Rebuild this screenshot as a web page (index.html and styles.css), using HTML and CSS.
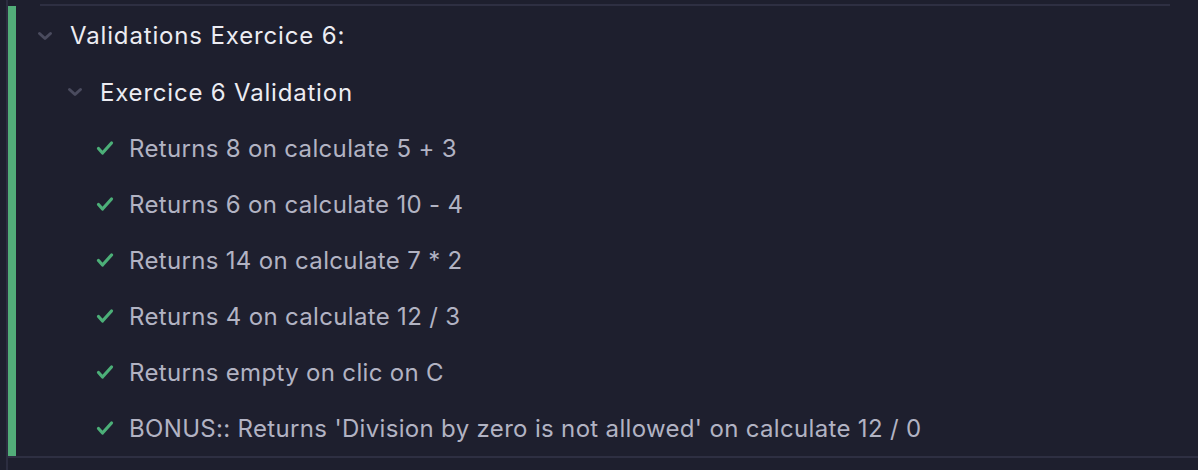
FILE: index.html
```html
<!DOCTYPE html>
<html>
<head>
<meta charset="utf-8">
<link rel="stylesheet" href="styles.css">
</head>
<body>
<div class="frame">
  <div class="topline"></div>
  <div class="panel">
    <div class="bar"></div>
    <div class="tree">
      <div class="row suite">
        <svg class="chev" width="16" height="10" viewBox="0 0 16 10"><path d="M2.5 2.5 L8 7.5 L13.5 2.5" fill="none" stroke="#4a4b5e" stroke-width="3" stroke-linecap="round" stroke-linejoin="round"/></svg>
        <span>Validations Exercice 6:</span>
      </div>
      <div class="row suite sub">
        <svg class="chev" width="16" height="10" viewBox="0 0 16 10"><path d="M2.5 2.5 L8 7.5 L13.5 2.5" fill="none" stroke="#4a4b5e" stroke-width="3" stroke-linecap="round" stroke-linejoin="round"/></svg>
        <span>Exercice 6 Validation</span>
      </div>
      <div class="row test"><svg class="check" width="18" height="16" viewBox="0 0 18 16"><path d="M2.5 8.5 L6.5 13 L15.5 3" fill="none" stroke="#4caf78" stroke-width="3.2" stroke-linecap="round" stroke-linejoin="round"/></svg><span>Returns 8 on calculate 5 + 3</span></div>
      <div class="row test"><svg class="check" width="18" height="16" viewBox="0 0 18 16"><path d="M2.5 8.5 L6.5 13 L15.5 3" fill="none" stroke="#4caf78" stroke-width="3.2" stroke-linecap="round" stroke-linejoin="round"/></svg><span>Returns 6 on calculate 10 - 4</span></div>
      <div class="row test"><svg class="check" width="18" height="16" viewBox="0 0 18 16"><path d="M2.5 8.5 L6.5 13 L15.5 3" fill="none" stroke="#4caf78" stroke-width="3.2" stroke-linecap="round" stroke-linejoin="round"/></svg><span>Returns 14 on calculate 7 * 2</span></div>
      <div class="row test"><svg class="check" width="18" height="16" viewBox="0 0 18 16"><path d="M2.5 8.5 L6.5 13 L15.5 3" fill="none" stroke="#4caf78" stroke-width="3.2" stroke-linecap="round" stroke-linejoin="round"/></svg><span>Returns 4 on calculate 12 / 3</span></div>
      <div class="row test"><svg class="check" width="18" height="16" viewBox="0 0 18 16"><path d="M2.5 8.5 L6.5 13 L15.5 3" fill="none" stroke="#4caf78" stroke-width="3.2" stroke-linecap="round" stroke-linejoin="round"/></svg><span>Returns empty on clic on C</span></div>
      <div class="row test"><svg class="check" width="18" height="16" viewBox="0 0 18 16"><path d="M2.5 8.5 L6.5 13 L15.5 3" fill="none" stroke="#4caf78" stroke-width="3.2" stroke-linecap="round" stroke-linejoin="round"/></svg><span>BONUS:: Returns 'Division by zero is not allowed' on calculate 12 / 0</span></div>
    </div>
  </div>
  <div class="bottomline"></div>
</div>
</body>
</html>
```
FILE: styles.css
```css
html, body {
  margin: 0;
  padding: 0;
  background: #1e1f2e;
  height: 100%;
}
body {
  font-family: Inter, "Noto Sans", "Liberation Sans", sans-serif;
  overflow: hidden;
}
.frame {
  margin-left: 6px;
  border-left: 2px solid #2c2d40;
  height: 470px;
  display: flex;
  flex-direction: column;
}
.topline {
  margin: 4px 28px 0 32px;
  height: 2px;
  background: #2e2f42;
}
.panel {
  display: flex;
  height: 450px;
}
.bar {
  width: 8px;
  background: #52ad79;
  flex: none;
}
.tree {
  display: flex;
  flex-direction: column;
  padding-top: 1px;
}
.row {
  height: 56px;
  display: flex;
  align-items: center;
  font-size: 24px;
  white-space: nowrap;
}
.row.suite {
  color: #ececf2;
  padding-left: 21px;
  gap: 17px;
  letter-spacing: 0.85px;
}
.row.suite:first-child { height: 57px; }
.row.sub { padding-left: 51px; letter-spacing: 0.8px; }
.chev { flex: none; }
.row.test {
  color: #b2b3c3;
  padding-left: 80px;
  gap: 15px;
  letter-spacing: 0.33px;
}
.check { flex: none; }
.bottomline {
  height: 2px;
  background: #2e2f42;
}
```
